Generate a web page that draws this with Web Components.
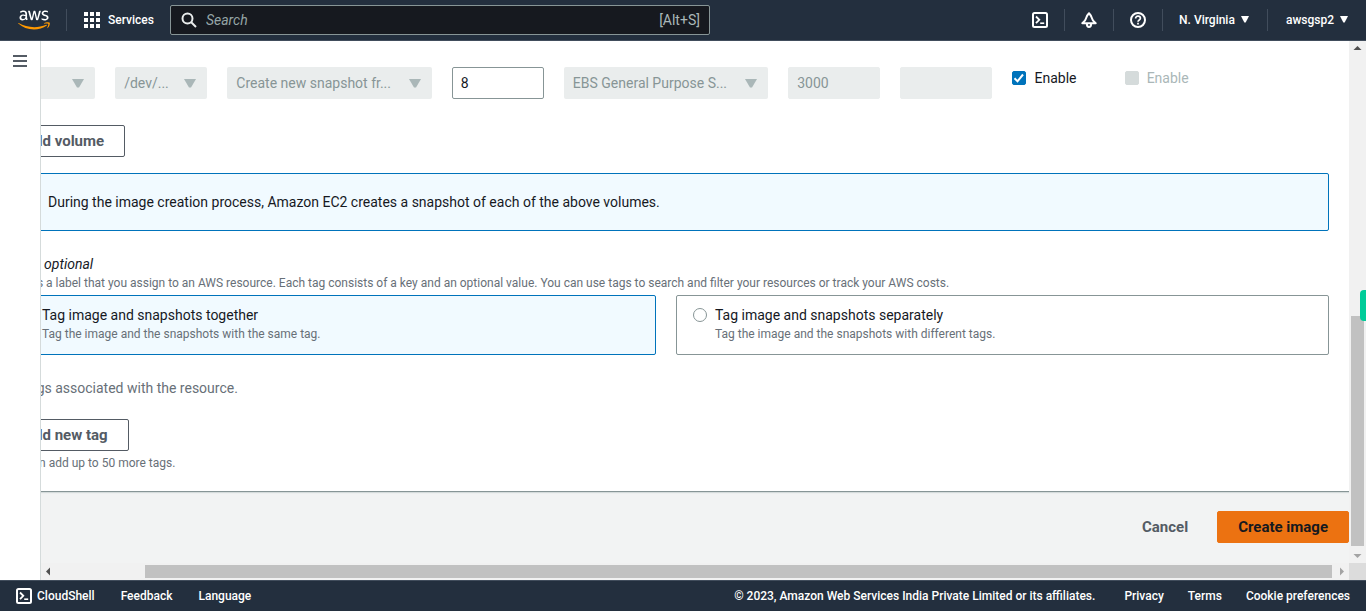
<!DOCTYPE html>
<html lang="en">
<head>
<meta charset="utf-8">
<title>Create image | EC2</title>
<style>
  html, body { height: 100%; }
  body {
    margin: 0;
    font: 14px/22px Roboto, "Noto Sans", sans-serif;
    color: #16191f;
    background: #fff;
    overflow: hidden;
  }
</style>
</head>
<body>
<console-app></console-app>

<script>
class BaseElement extends HTMLElement {
  constructor() {
    super();
    const t = document.createElement('template');
    t.innerHTML = `<style>*,*::before,*::after{box-sizing:border-box}:host([hidden]){display:none}</style>` + this.render();
    this.attachShadow({ mode: 'open' }).append(t.content.cloneNode(true));
  }
  render() { return '<slot></slot>'; }
}
const define = (name, render) => customElements.define(name, class extends BaseElement {
  render() { return render(this); }
});

const shellIcon = `<svg width="16" height="16" viewBox="0 0 16 16" fill="none" stroke="#fff" stroke-width="2" aria-hidden="true"><rect x="1" y="1" width="14" height="14" rx="1.5"/><path d="M4 4.5 7.3 7.8 4 11.2" stroke-width="1.8"/><path d="M8.2 11.2h4" stroke-width="1.6"/></svg>`;

/* ---------- top navigation ---------- */
define('nav-menu', () => `
  <style>
    :host { display: flex; }
    button { display: flex; align-items: center; gap: 6px; border: 0; padding: 0; background: none; color: #fff; font: inherit; font-weight: 500; white-space: nowrap; }
  </style>
  <button type="button"><slot></slot><svg width="8" height="7" viewBox="0 0 8 7" aria-hidden="true"><path d="M0 0h8L4.7 6.5h-1.4z" fill="#fff"/></svg></button>`);

define('nav-icon', el => `
  <style>
    :host { display: flex; }
    button { display: flex; border: 0; padding: 0; background: none; }
  </style>
  <button type="button" aria-label="${el.getAttribute('label')}"><slot></slot></button>`);

define('nav-search', () => `
  <style>
    :host { display: flex; align-items: center; height: 30px; gap: 9px; padding: 0 9px 0 10px; border: 1px solid #879596; border-radius: 2px; background: #16191f; color: #aab7b8; font-size: 14px; }
    svg { flex: none; }
    input { flex: 1; min-width: 0; border: 0; padding: 0; outline: 0; background: none; color: #d5dbdb; font: inherit; }
    input::placeholder { color: #95a5a6; font-style: italic; opacity: 1; }
  </style>
  <svg width="16" height="16" viewBox="0 0 16 16" fill="none" stroke="#eaeded" stroke-width="2" aria-hidden="true"><circle cx="6.5" cy="6.5" r="5"/><path d="M10 10l5 5"/></svg>
  <input type="search" placeholder="Search" aria-label="Search">
  <span>[Alt+S]</span>`);

define('top-nav', () => `
  <style>
    :host { display: flex; align-items: center; height: 41px; padding: 0 18px 1px; background: #232f3e; border-bottom: 1px solid #414d5c; color: #fff; font-size: 12px; }
    i { width: 1px; height: 22px; background: #414d5c; flex: none; }
    .logo { display: flex; margin-right: 16px; }
    .services { display: flex; align-items: center; gap: 8px; margin: 0 16px 0 17px; border: 0; padding: 0; background: none; color: #fff; font: inherit; font-weight: 500; }
    nav-search { flex: 0 1 540px; }
    .tools { display: flex; align-items: center; margin-left: auto; gap: 16px; }
    nav-menu + i { margin: 0 2px; }
  </style>
  <a class="logo" href="#" aria-label="AWS Console Home">
    <svg width="32" height="20" viewBox="0 0 304 182" aria-hidden="true">
      <path fill="#fff" d="M86.400 66.400c0 3.700.4 6.700 1.100 8.900.8 2.200 1.800 4.600 3.200 7.200.5.800.7 1.600.7 2.300 0 1-.6 2-1.900 3l-6.300 4.200c-.9.600-1.800.9-2.600.9-1 0-2-.5-3-1.400-1.400-1.500-2.600-3.100-3.600-4.700-1-1.700-2-3.600-3.100-5.900-7.800 9.200-17.600 13.800-29.400 13.800-8.400 0-15.100-2.400-20-7.200-4.900-4.800-7.400-11.200-7.400-19.200 0-8.500 3-15.400 9.100-20.600s14.200-7.800 24.500-7.800c3.400 0 6.900.3 10.600.8 3.700.5 7.500 1.300 11.500 2.200v-7.300c0-7.600-1.600-12.900-4.700-16-3.200-3.100-8.600-4.600-16.300-4.600-3.500 0-7.100.4-10.800 1.300-3.700.9-7.300 2-10.800 3.400-1.600.7-2.800 1.100-3.500 1.300-.7.200-1.200.3-1.600.3-1.400 0-2.100-1-2.100-3.100v-4.900c0-1.600.2-2.800.7-3.500.5-.7 1.400-1.400 2.800-2.100 3.500-1.800 7.700-3.300 12.600-4.500 4.900-1.300 10.100-1.900 15.600-1.900 11.900 0 20.600 2.700 26.200 8.100 5.500 5.400 8.300 13.600 8.300 24.600v32.400zM45.800 81.600c3.300 0 6.700-.6 10.300-1.800 3.600-1.200 6.800-3.400 9.500-6.400 1.600-1.900 2.800-4 3.400-6.400.6-2.400 1-5.300 1-8.700v-4.200c-2.900-.7-6-1.300-9.200-1.700-3.200-.4-6.300-.6-9.400-.6-6.700 0-11.600 1.300-14.900 4-3.300 2.700-4.900 6.500-4.900 11.500 0 4.700 1.200 8.200 3.700 10.600 2.400 2.500 5.900 3.700 10.500 3.700zm80.300 10.800c-1.800 0-3-.3-3.800-1-.8-.6-1.500-2-2.100-3.900L96.700 10.200c-.6-2-.9-3.300-.9-4 0-1.600.8-2.500 2.400-2.500h9.800c1.900 0 3.200.3 3.900 1 .8.600 1.400 2 2 3.900l16.800 66.200 15.600-66.200c.5-2 1.100-3.300 1.900-3.900.8-.6 2.200-1 4-1h8c1.900 0 3.200.3 4 1 .8.600 1.500 2 1.900 3.900l15.800 67 17.300-67c.6-2 1.300-3.300 2-3.900.8-.6 2.100-1 3.900-1h9.300c1.600 0 2.500.8 2.500 2.500 0 .5-.1 1-.2 1.600-.1.600-.3 1.400-.7 2.500l-24.100 77.300c-.6 2-1.300 3.300-2.100 3.900-.8.600-2.100 1-3.800 1h-8.600c-1.900 0-3.200-.3-4-1-.8-.7-1.500-2-1.900-4L156 23l-15.400 64.400c-.5 2-1.100 3.300-1.900 4-.8.700-2.200 1-4 1zm128.500 2.700c-5.200 0-10.400-.6-15.400-1.800-5-1.200-8.900-2.500-11.500-4-1.600-.9-2.700-1.900-3.100-2.800-.4-.9-.6-1.900-.6-2.800v-5.100c0-2.100.8-3.100 2.300-3.100.6 0 1.200.1 1.800.3.600.2 1.500.6 2.500 1 3.400 1.500 7.100 2.700 11 3.500 4 .8 7.900 1.200 11.900 1.200 6.300 0 11.200-1.100 14.600-3.300 3.400-2.200 5.200-5.400 5.200-9.500 0-2.800-.9-5.100-2.700-7-1.800-1.900-5.200-3.600-10.100-5.200L246 52c-7.300-2.300-12.700-5.700-16-10.200-3.300-4.400-5-9.300-5-14.500 0-4.200.9-7.900 2.700-11.100 1.800-3.200 4.200-6 7.200-8.200 3-2.300 6.400-4 10.400-5.200 4-1.200 8.200-1.700 12.600-1.700 2.200 0 4.500.1 6.700.4 2.300.3 4.400.7 6.500 1.100 2 .5 3.900 1 5.700 1.600 1.800.6 3.200 1.200 4.200 1.800 1.400.8 2.400 1.600 3 2.500.6.800.9 1.900.9 3.300v4.700c0 2.100-.8 3.200-2.300 3.200-.8 0-2.100-.4-3.800-1.200-5.700-2.600-12.100-3.900-19.200-3.900-5.700 0-10.200.9-13.300 2.800-3.100 1.900-4.700 4.800-4.700 8.900 0 2.800 1 5.200 3 7.100 2 1.900 5.700 3.800 11 5.500l14.200 4.500c7.200 2.300 12.400 5.500 15.500 9.600 3.100 4.100 4.600 8.800 4.600 14 0 4.300-.9 8.200-2.600 11.600-1.800 3.400-4.200 6.400-7.300 8.800-3.100 2.500-6.800 4.300-11.100 5.600-4.500 1.400-9.200 2.100-14.300 2.100z"/>
      <g fill="#f90"><path d="M273.500 143.700c-32.900 24.300-80.700 37.200-121.800 37.200-57.600 0-109.500-21.300-148.700-56.700-3.100-2.800-.3-6.600 3.400-4.400 42.400 24.600 94.700 39.500 148.800 39.500 36.500 0 76.600-7.600 113.500-23.200 5.500-2.500 10.200 3.600 4.800 7.600z"/><path d="M287.200 128.100c-4.200-5.400-27.800-2.600-38.500-1.300-3.200.4-3.700-2.400-.8-4.500 18.800-13.200 49.700-9.400 53.300-5 3.600 4.500-1 35.400-18.600 50.200-2.700 2.300-5.300 1.100-4.100-1.900 4-9.900 12.900-32.200 8.700-37.500z"/></g>
    </svg>
  </a>
  <i></i>
  <button class="services" type="button">
    <svg width="16" height="16" viewBox="0 0 16 16" fill="#fff" aria-hidden="true"><path d="M0 0h4v4H0zM6 0h4v4H6zM12 0h4v4h-4zM0 6h4v4H0zM6 6h4v4H6zM12 6h4v4h-4zM0 12h4v4H0zM6 12h4v4H6zM12 12h4v4h-4z"/></svg>
    Services
  </button>
  <nav-search></nav-search>
  <div class="tools">
    <nav-icon label="CloudShell">${shellIcon}</nav-icon>
    <i></i>
    <nav-icon label="Notifications"><svg width="16" height="16" viewBox="0 0 16 16" fill="none" stroke="#fff" stroke-width="2" stroke-linejoin="round" aria-hidden="true"><path d="M8 1.200C6.300 3 5.500 4 5.200 5.800 4.900 8 3.600 9.300 1.300 11.200h13.400c-2.300-1.900-3.600-3.200-3.900-5.400C10.500 4 9.700 3 8 1.200z"/><path d="M5.900 12c0 2 .8 3 2.100 3s2.100-1 2.100-3"/></svg></nav-icon>
    <i></i>
    <nav-icon label="Help"><svg width="16" height="16" viewBox="0 0 16 16" fill="none" stroke="#fff" aria-hidden="true"><circle cx="8" cy="8" r="7" stroke-width="2"/><path d="M5.600 6.500c0-1.500 1-2.300 2.400-2.300s2.400.8 2.400 2.100c0 1.700-2.400 1.600-2.400 3.500" stroke-width="1.700"/><path d="M8 10.700v1.800" stroke-width="1.700"/></svg></nav-icon>
    <i></i>
    <nav-menu>N. Virginia</nav-menu>
    <i></i>
    <nav-menu>awsgsp2</nav-menu>
  </div>`);

/* ---------- footer ---------- */
define('bottom-bar', () => `
  <style>
    :host { display: flex; align-items: center; justify-content: space-between; height: 31px; padding: 0 16px; background: #232f3e; border-top: 1px solid #414d5c; color: #fff; font-size: 12px; font-weight: 500; white-space: nowrap; }
    nav { display: flex; align-items: center; gap: 26px; }
    nav + nav { gap: 24px; }
    a { color: inherit; text-decoration: none; display: flex; align-items: center; gap: 5px; }
    small { font-size: 12px; padding-right: 5px; }
  </style>
  <nav aria-label="Tools"><a href="#">${shellIcon}CloudShell</a><a href="#">Feedback</a><a href="#">Language</a></nav>
  <nav aria-label="Legal"><small>© 2023, Amazon Web Services India Private Limited or its affiliates.</small>
  <a href="#">Privacy</a><a href="#">Terms</a><a href="#">Cookie preferences</a></nav>`);

/* ---------- form controls ---------- */
define('ui-button', el => `
  <style>
    :host { display: inline-flex; }
    button { height: 32px; padding: 0 20px; border: 1px solid #545b64; border-radius: 2px; background: #fff; color: #545b64; font: inherit; font-size: 15px; font-weight: 700; line-height: 20px; white-space: nowrap; }
    :host([variant=link]) button { border-color: transparent; background: none; }
    :host([variant=primary]) button { border-color: #ec7211; background: #ec7211; color: #16191f; }
  </style>
  <button type="button"><slot></slot></button>`);

define('ui-select', el => `
  <style>
    :host { display: grid; align-items: center; }
    select, svg { grid-area: 1 / 1; }
    select { width: 100%; height: 32px; padding: 0 30px 0 9px; border: 0; border-radius: 2px; appearance: none; background: #eaeded; color: #879596; font: inherit; opacity: 1; }
    svg { justify-self: end; margin-right: 11px; pointer-events: none; }
  </style>
  <select disabled aria-label="${el.getAttribute('label')}"><option>${el.getAttribute('value')}</option></select>
  <svg width="12" height="9" viewBox="0 0 12 9" aria-hidden="true"><path d="M0 0h12L7 8.500H5z" fill="#aab7b8"/></svg>`);

define('ui-input', el => `
  <style>
    :host { display: block; }
    input { display: block; width: 100%; height: 32px; padding: 0 8px; border: 1px solid #879596; border-radius: 2px; background: #fff; color: #16191f; font: inherit; }
    input:disabled { border-color: #eaeded; background: #eaeded; color: #879596; }
  </style>
  <input type="text" aria-label="${el.getAttribute('label')}" value="${el.getAttribute('value') || ''}" ${el.hasAttribute('disabled') ? 'disabled' : ''}>`);

define('ui-checkbox', el => `
  <style>
    :host { display: block; }
    label { display: flex; align-items: center; gap: 8px; }
    span { display: grid; }
    input, svg { grid-area: 1 / 1; width: 14px; height: 14px; margin: 0; }
    input { appearance: none; border: 1px solid #879596; border-radius: 2px; background: #fff; }
    input:checked { background: #0073bb; border-color: #0073bb; }
    input:disabled { background: #d5dbdb; border-color: #d5dbdb; }
    svg { pointer-events: none; visibility: hidden; }
    input:checked + svg { visibility: visible; }
    :host([disabled]) { color: #aab7b8; }
  </style>
  <label><span><input type="checkbox" ${el.hasAttribute('checked') ? 'checked' : ''} ${el.hasAttribute('disabled') ? 'disabled' : ''}><svg viewBox="0 0 14 14" fill="none" stroke="#fff" stroke-width="2" aria-hidden="true"><path d="M2.500 7.300l3 3L11 3.500"/></svg></span><slot></slot></label>`);

define('ui-tile', el => `
  <style>
    :host { display: block; }
    label { display: grid; grid-template-columns: 14px 1fr; column-gap: 8px; align-items: center; padding: 8px 16px 12px; border: 1px solid #879596; border-radius: 2px; background: #fff; }
    label:has(:checked) { border-color: #0073bb; background: #f1faff; }
    input { appearance: none; width: 14px; height: 14px; margin: 0; border: 1px solid #879596; border-radius: 50%; background: #fff; }
    input:checked { border: 4px solid #0073bb; }
    .hint { grid-column: 2; color: #687078; font-size: 12px; line-height: 16px; }
  </style>
  <label><input type="radio" name="tagging" ${el.hasAttribute('checked') ? 'checked' : ''}><slot></slot><span class="hint"><slot name="hint"></slot></span></label>`);

define('ui-alert', () => `
  <style>
    :host { display: flex; align-items: center; gap: 10px; height: 58px; padding: 0 18px; border: 1px solid #0073bb; border-radius: 2px; background: #f1faff; }
    svg { flex: none; }
  </style>
  <svg width="16" height="16" viewBox="0 0 16 16" fill="none" stroke="#0073bb" stroke-width="2" aria-hidden="true"><circle cx="8" cy="8" r="7"/><path d="M8 7v5M8 4v2"/></svg>
  <span><slot></slot></span>`);

/* ---------- layout pieces ---------- */
define('side-rail', () => `
  <style>
    :host { display: block; padding: 14px 13px; background: #fff; border-right: 1px solid #d5dbdb; }
    button { display: flex; padding: 0; border: 0; background: none; }
  </style>
  <button type="button" aria-label="Open navigation"><svg width="14" height="12" viewBox="0 0 14 12" fill="#545b64" aria-hidden="true"><path d="M0 0h14v2H0zM0 5h14v2H0zM0 10h14v2H0z"/></svg></button>`);

define('scroll-track', el => `
  <style>
    :host { display: flex; background: #f1f1f1; overflow: hidden; }
    :host([vertical]) { flex-direction: column; }
    svg { flex: none; width: 17px; height: 17px; }
    :host([vertical]) svg { transform: rotate(90deg); }
    .before { flex: ${el.getAttribute('before')} 0 0; }
    .thumb { flex: ${el.getAttribute('thumb')} 0 0; background: #c1c1c1; margin: 2px 0; }
    :host([vertical]) .thumb { margin: 0 2px; }
  </style>
  <svg viewBox="0 0 17 17" aria-hidden="true"><path d="M5 8.500 9 4.500v8z" fill="#505050"/></svg>
  <div class="before"></div><div class="thumb"></div>
  <svg viewBox="0 0 17 17" aria-hidden="true"><path d="M12 8.500 8 4.500v8z" fill="#a3a3a3"/></svg>`);

define('volume-row', () => `
  <style>
    :host { display: grid; grid-template-columns: repeat(12, minmax(0, 1fr)); column-gap: 20px; align-items: start; }
    .wide { grid-column: span 2; }
  </style>
  <ui-select label="Storage type" value=""></ui-select>
  <ui-select label="Device" value="/dev/..."></ui-select>
  <ui-select class="wide" label="Snapshot" value="Create new snapshot fr..."></ui-select>
  <ui-input label="Size" value="8"></ui-input>
  <ui-select class="wide" label="Volume type" value="EBS General Purpose S..."></ui-select>
  <ui-input label="IOPS" value="3000" disabled></ui-input>
  <ui-input label="Throughput" disabled></ui-input>
  <ui-checkbox checked>Enable</ui-checkbox>
  <ui-checkbox disabled>Enable</ui-checkbox>`);

define('image-form', () => `
  <style>
    :host { display: block; }
    .card { padding: 26px 20px 20px; background: #fff; border-bottom: 1px solid #879596; box-shadow: 0 1px 1px #d5dbdb; }
    .add { display: flex; margin: 26px 0 16px; }
    h3 { margin: 22px 0 0; font: inherit; }
    p { margin: 0; color: #687078; }
    .small { font-size: 12px; line-height: 16px; white-space: nowrap; }
    .tiles { display: grid; grid-template-columns: 1fr 1fr; gap: 20px; margin: 4px 0 22px; }
    .new { display: flex; margin: 20px 0 4px; }
    .actions { display: flex; justify-content: flex-end; gap: 8px; padding: 19px 0; }
  </style>
  <section class="card">
    <volume-row></volume-row>
    <div class="add"><ui-button>Add volume</ui-button></div>
    <ui-alert>During the image creation process, Amazon EC2 creates a snapshot of each of the above volumes.</ui-alert>
    <h3>Tags - <em>optional</em></h3>
    <p class="small">A tag is a label that you assign to an AWS resource. Each tag consists of a key and an optional value. You can use tags to search and filter your resources or track your AWS costs.</p>
    <div class="tiles">
      <ui-tile checked>Tag image and snapshots together<span slot="hint">Tag the image and the snapshots with the same tag.</span></ui-tile>
      <ui-tile>Tag image and snapshots separately<span slot="hint">Tag the image and the snapshots with different tags.</span></ui-tile>
    </div>
    <p>No tags associated with the resource.</p>
    <div class="new"><ui-button>Add new tag</ui-button></div>
    <p class="small">You can add up to 50 more tags.</p>
  </section>
  <div class="actions"><ui-button variant="link">Cancel</ui-button><ui-button variant="primary">Create image</ui-button></div>`);

define('console-app', () => `
  <style>
    :host { display: grid; grid-template-rows: auto minmax(0, 1fr) auto; height: 100vh; }
    main { display: grid; grid-template: minmax(0, 1fr) 17px / 41px minmax(0, 1fr) 17px; background: #dcdcdc; }
    side-rail { grid-row: 1 / 3; }
    .pane { overflow: hidden; background: #f2f3f3; }
    image-form { margin-left: -58px; }
    .tab { position: absolute; right: 0; top: 290px; width: 6px; height: 31px; border-radius: 4px 0 0 4px; background: #0c9; }
  </style>
  <top-nav></top-nav>
  <main>
    <side-rail></side-rail>
    <div class="pane"><image-form></image-form></div>
    <scroll-track vertical before="258" thumb="230"></scroll-track>
    <scroll-track before="87" thumb="1187"></scroll-track>
  </main>
  <bottom-bar></bottom-bar>
  <div class="tab"></div>`);
</script>
</body>
</html>
